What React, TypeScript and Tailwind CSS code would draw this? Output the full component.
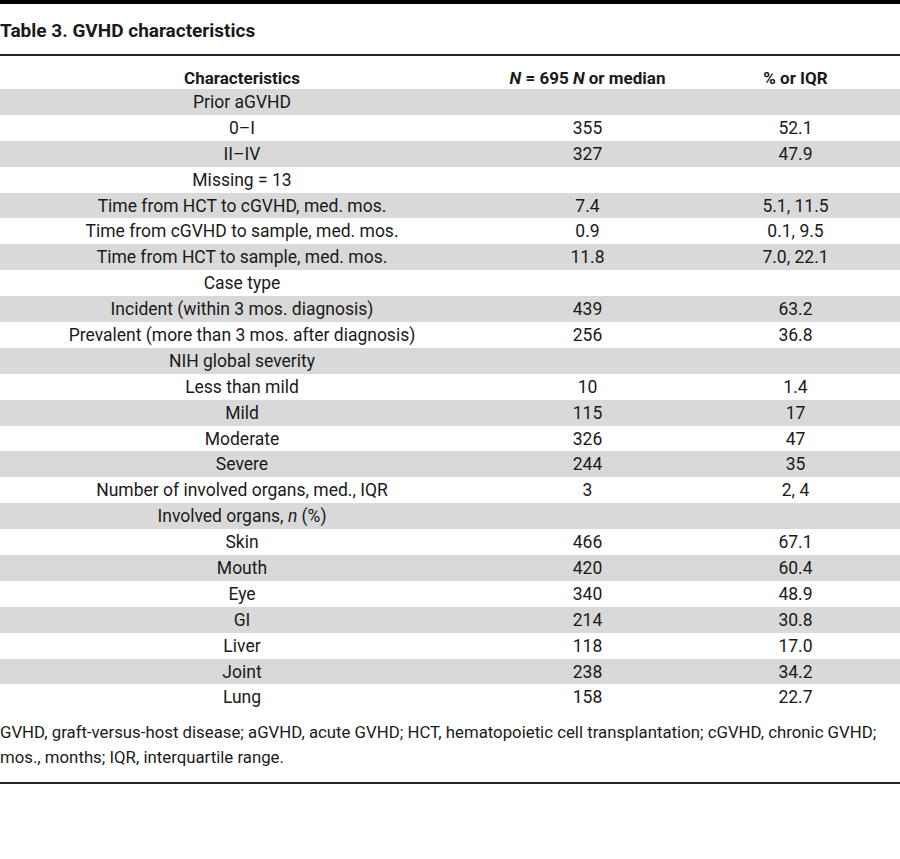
import React from "react";

type Row = { c: React.ReactNode; n: string; p: string };

const rows: Row[] = [
  { c: "Prior aGVHD", n: "", p: "" },
  { c: "0–I", n: "355", p: "52.1" },
  { c: "II–IV", n: "327", p: "47.9" },
  { c: "Missing = 13", n: "", p: "" },
  { c: "Time from HCT to cGVHD, med. mos.", n: "7.4", p: "5.1, 11.5" },
  { c: "Time from cGVHD to sample, med. mos.", n: "0.9", p: "0.1, 9.5" },
  { c: "Time from HCT to sample, med. mos.", n: "11.8", p: "7.0, 22.1" },
  { c: "Case type", n: "", p: "" },
  { c: "Incident (within 3 mos. diagnosis)", n: "439", p: "63.2" },
  { c: "Prevalent (more than 3 mos. after diagnosis)", n: "256", p: "36.8" },
  { c: "NIH global severity", n: "", p: "" },
  { c: "Less than mild", n: "10", p: "1.4" },
  { c: "Mild", n: "115", p: "17" },
  { c: "Moderate", n: "326", p: "47" },
  { c: "Severe", n: "244", p: "35" },
  { c: "Number of involved organs, med., IQR", n: "3", p: "2, 4" },
  {
    c: (
      <>
        Involved organs, <i>n</i> (%)
      </>
    ),
    n: "",
    p: "",
  },
  { c: "Skin", n: "466", p: "67.1" },
  { c: "Mouth", n: "420", p: "60.4" },
  { c: "Eye", n: "340", p: "48.9" },
  { c: "GI", n: "214", p: "30.8" },
  { c: "Liver", n: "118", p: "17.0" },
  { c: "Joint", n: "238", p: "34.2" },
  { c: "Lung", n: "158", p: "22.7" },
];

export default function App() {
  return (
    <div
      className="w-[900px] h-[859px] bg-white text-[#1a1a1a]"
      style={{ fontFamily: "Roboto, 'Liberation Sans', sans-serif" }}
    >
      <div className="h-[4px] bg-black" />
      <div className="h-[50px] flex items-center text-[19px] font-bold pt-[4px]">
        Table 3. GVHD characteristics
      </div>
      <div className="h-[2px] bg-[#222]" />
      <div className="grid grid-cols-[484px_207px_1fr] h-[33px] items-center pt-[10px] text-[17px] font-bold text-center">
        <div>Characteristics</div>
        <div>
          <i>N</i> = 695 <i>N</i> or median
        </div>
        <div>% or IQR</div>
      </div>
      <div className="flex flex-col">
        {rows.map((r, i) => (
          <div
            key={i}
            className={`grid grid-cols-[484px_207px_1fr] h-[25.9px] items-center text-center text-[17.5px] ${
              i % 2 === 0 ? "bg-[#d9d9d9]" : "bg-white"
            }`}
          >
            <div>{r.c}</div>
            <div>{r.n}</div>
            <div>{r.p}</div>
          </div>
        ))}
      </div>
      <div className="pt-[10px] pb-[12px] text-[16.8px] leading-[25px]">
        GVHD, graft-versus-host disease; aGVHD, acute GVHD; HCT, hematopoietic cell transplantation; cGVHD, chronic GVHD; mos., months; IQR, interquartile range.
      </div>
      <div className="h-[2px] bg-[#222]" />
    </div>
  );
}
